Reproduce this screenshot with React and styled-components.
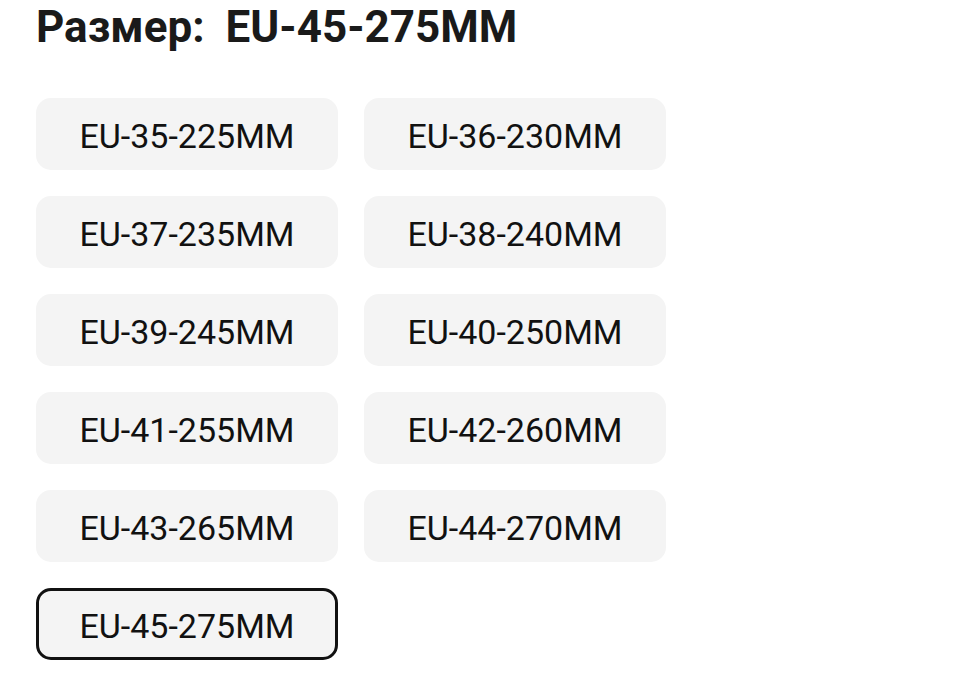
import React from 'react'
import styled, { createGlobalStyle } from 'styled-components'

const GlobalStyle = createGlobalStyle`
  body {
    margin: 0;
    background: #ffffff;
    font-family: Roboto, "Noto Sans", Arial, sans-serif;
    color: #111111;
  }
`

const Wrapper = styled.div`
  padding: 0 0 0 36px;
`

const Title = styled.h2`
  margin: 0;
  padding-top: 1px;
  font-size: 44px;
  line-height: 52px;
  font-weight: 700;
  color: #1a1a1a;
  span {
    margin-left: 21px;
  }
`

const SizeGrid = styled.div`
  display: grid;
  grid-template-columns: repeat(2, 302px);
  column-gap: 26px;
  row-gap: 26px;
  margin-top: 45px;
`

const SizeButton = styled.button`
  box-sizing: border-box;
  height: 72px;
  border-radius: 15px;
  background: #f4f4f4;
  border: 3px solid ${p => (p.$active ? '#111111' : 'transparent')};
  font-family: Roboto, "Noto Sans", Arial, sans-serif;
  font-size: 34px;
  font-weight: 400;
  color: #111111;
  padding: 4px 0 0;
  cursor: pointer;
`

const sizes = [
  'EU-35-225MM', 'EU-36-230MM',
  'EU-37-235MM', 'EU-38-240MM',
  'EU-39-245MM', 'EU-40-250MM',
  'EU-41-255MM', 'EU-42-260MM',
  'EU-43-265MM', 'EU-44-270MM',
  'EU-45-275MM',
]

const App = () => {
  const selected = 'EU-45-275MM'
  return (
    <Wrapper>
      <GlobalStyle />
      <Title>Размер:<span>{selected}</span></Title>
      <SizeGrid>
        {sizes.map(s => (
          <SizeButton key={s} $active={s === selected}>{s}</SizeButton>
        ))}
      </SizeGrid>
    </Wrapper>
  )
}

export default App
